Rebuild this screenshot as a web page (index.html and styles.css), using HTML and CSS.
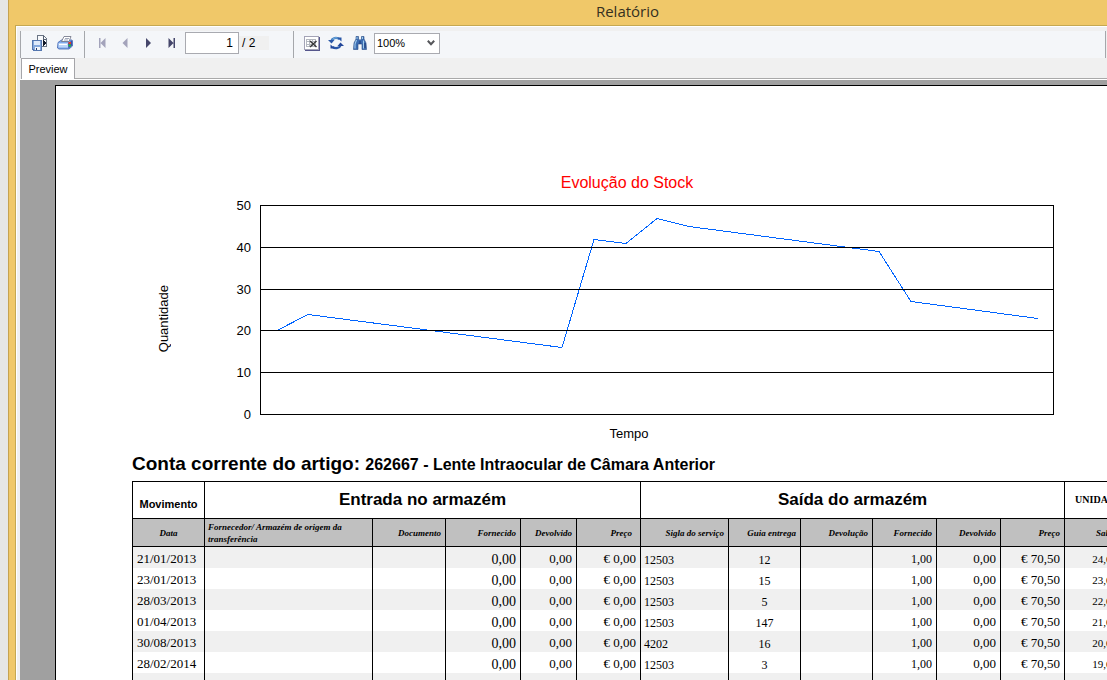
FILE: index.html
```html
<!DOCTYPE html>
<html lang="pt">
<head>
<meta charset="utf-8">
<title>Relatório</title>
<link rel="stylesheet" href="styles.css">
</head>
<body>
<div class="desktop">
  <main class="window">
    <h1 class="titlebar">Relatório</h1>
    <div class="client">
      <div class="toolbar">
        <div class="group files">
          <button class="tool" type="button" aria-label="Exportar">
            <svg width="16" height="16" viewBox="0 0 16 16" shape-rendering="crispEdges">
              <path d="M5.5 .5h6l3 3v8h-9z" fill="#f7f9fc" stroke="#6a7484"/>
              <path d="M11 1v3h3" fill="none" stroke="#555f70"/>
              <path d="M11 5l3 3-3 3z" fill="#111827"/>
              <path d="M.5 5.500h9v10H2L.5 14z" fill="#86a9dd" stroke="#5577b0"/>
              <path d="M2 6h6v4H2z" fill="#dfeafa"/>
              <path d="M3 12h5v3H3z" fill="#f4f6fa"/><path d="M4 13h1v2H4z" fill="#223a70"/>
            </svg>
          </button>
          <button class="tool" type="button" aria-label="Imprimir">
            <svg width="16" height="14" viewBox="0 0 16 14">
              <path d="M1 6.500L4.500 4H15l.5 1v5L12 13H2L.5 12z" fill="#7fa9ea" stroke="#4365b0" stroke-width=".8"/>
              <path d="M4.500 5.500l2.500-5h7L12 5.500z" fill="#fff" stroke="#6a6f82" stroke-width=".8"/>
              <path d="M8 2.500h4M7 4h4" stroke="#8a93aa" stroke-width=".8"/>
              <path d="M1.500 7H11v4.500H1.500z" fill="#bdd6f9"/><path d="M2 8.500h8" stroke="#fff"/>
              <path d="M11 7l4-2.500v5L11.500 12.500z" fill="#3c4fae"/>
              <path d="M11.500 6h2.500v2h-2.500z" fill="#e33b25"/><path d="M11.500 8.500h2.500v2h-2.500z" fill="#23bd3d"/>
            </svg>
          </button>
        </div>
        <div class="group nav">
          <button class="tool" type="button" disabled aria-label="Primeira página"><svg width="8" height="10" viewBox="0 0 8 10"><path d="M1 0h1.500v10H1zM7.500 0v10L2.500 5z" fill="#a3a3bb"/></svg></button>
          <button class="tool" type="button" disabled aria-label="Página anterior"><svg width="8" height="10" viewBox="0 0 8 10"><path d="M6.500 0v10l-5-5z" fill="#a3a3bb"/></svg></button>
          <button class="tool" type="button" aria-label="Página seguinte"><svg width="8" height="10" viewBox="0 0 8 10"><path d="M2 0v10l5-5z" fill="#45466b"/></svg></button>
          <button class="tool" type="button" aria-label="Última página"><svg width="8" height="10" viewBox="0 0 8 10"><path d="M1.500 0v10l5-5zM6.500 0H8v10H6.500z" fill="#45466b"/></svg></button>
        </div>
        <input class="page-number" type="text" value="1" aria-label="Página">
        <span class="page-total">/ 2</span>
        <div class="group view">
          <button class="tool" type="button" aria-label="Fechar vista">
            <svg width="16" height="15" viewBox="0 0 16 15" shape-rendering="crispEdges">
              <path d="M.5.5h14v13H.5z" fill="#fff" stroke="#a3a3b6"/><path d="M15 1v13.500H1" fill="none" stroke="#55568c"/>
              <path d="M2.500 3.500h9v7h-9zM2 5.500h10M2 8.500h10M5.500 3v8M8.500 3v8" fill="none" stroke="#b4b8c0"/>
              <path d="M6 5l6.500 6M12.500 5L6 11" stroke="#3a3a3a" stroke-width="1.500" shape-rendering="auto"/>
            </svg>
          </button>
          <button class="tool" type="button" aria-label="Atualizar">
            <svg width="16" height="14" viewBox="0 0 16 14">
              <path d="M3.200 5C4.200 2 8.500.8 11.500 3.200" fill="none" stroke="#3f7bc0" stroke-width="2.200"/>
              <path d="M0 4h6.500L3.500 7.500z" fill="#2b58a8"/>
              <path d="M9 1.500L13.500 1.500V5.500z" fill="#2b58a8"/>
              <path d="M12.800 9c-1 3-5.300 4.200-8.300 1.800" fill="none" stroke="#2b58a8" stroke-width="2.200"/>
              <path d="M16 10H9.500L12.500 6.500z" fill="#23479a"/>
              <path d="M7 12.500H2.500V8.500z" fill="#23479a"/>
              <path d="M4.500 3.200C6 1.800 8 1.600 9.500 2" fill="none" stroke="#8bc3e8" stroke-width=".8"/>
            </svg>
          </button>
          <button class="tool" type="button" aria-label="Procurar">
            <svg width="16" height="14" viewBox="0 0 16 14">
              <path d="M4 .5h2.500V3L7.500 4h1L9.500 3V.5H12V3l2 4 .5 6.500H10V8H6v5.500H1.500L2 7l2-4z" fill="#3b6bb0" stroke="#254984" stroke-width=".6"/>
              <path d="M4.500 4L3 8v4.500M11.500 4.500V12.500M5 1v2M10.500 1v2" fill="none" stroke="#9fcbed" stroke-width="1.100"/>
              <path d="M8 5v3M13 7v5" stroke="#1e3973"/>
            </svg>
          </button>
        </div>
        <div class="zoom">
          <select class="zoom-select" aria-label="Zoom"><option>100%</option></select>
          <svg class="zoom-arrow" width="8" height="6" viewBox="0 0 8 6"><path d="M.8.8L4 4.200 7.200.8" fill="none" stroke="#55565a" stroke-width="2"/></svg>
        </div>
      </div>
      <div class="tabs"><button class="tab" type="button">Preview</button></div>
      <div class="viewer">
        <article class="sheet">
          <section class="chart">
            <h2 class="chart-title">Evolução do Stock</h2>
            <div class="chart-body">
              <div class="axis-name"><span class="vertical">Quantidade</span></div>
              <div class="ticks"><span>50</span><span>40</span><span>30</span><span>20</span><span>10</span><span>0</span></div>
              <svg class="plot" viewBox="0 0 794 210" preserveAspectRatio="none" role="img" aria-label="Evolução do Stock">
                <polyline class="series" points="16,126 48,109.500 302,142.500 334,34.500 366,38.500 397,13.500 429,21.500 619,46.500 651,96.500 778,113.500"/>
                <path class="grid" d="M.5.5h793v209H.5zM0 42.500h794M0 84.500h794M0 125.500h794M0 167.500h794"/>
              </svg>
            </div>
            <p class="chart-x">Tempo</p>
          </section>
          <h2 class="account">Conta corrente do artigo: <span class="article">262667 - Lente Intraocular de Câmara Anterior</span></h2>
          <table class="ledger">
            <colgroup>
              <col class="w-date"><col class="w-supplier"><col class="w-doc"><col class="w-in"><col class="w-back"><col class="w-std">
              <col class="w-service"><col class="w-guide"><col class="w-guide"><col class="w-std"><col class="w-std"><col class="w-std"><col class="w-std">
            </colgroup>
            <thead>
              <tr class="groups"><th class="movement">Movimento</th><th colspan="5">Entrada no armazém</th><th colspan="6">Saída do armazém</th><th class="units">UNIDADES</th></tr>
              <tr class="fields"><th class="center">Data</th><th class="supplier">Fornecedor/ Armazém de origem da transferência</th><th>Documento</th><th>Fornecido</th><th>Devolvido</th><th class="price">Preço</th><th>Sigla do serviço</th><th>Guia entrega</th><th>Devolução</th><th>Fornecido</th><th>Devolvido</th><th>Preço</th><th class="balance">Saldo</th></tr>
            </thead>
            <tbody>
              <tr><td class="date">21/01/2013</td><td></td><td></td><td class="big">0,00</td><td>0,00</td><td>€ 0,00</td><td class="code">12503</td><td class="guide">12</td><td></td><td class="small">1,00</td><td>0,00</td><td>€ 70,50</td><td class="balance">24,00</td></tr>
              <tr><td class="date">23/01/2013</td><td></td><td></td><td class="big">0,00</td><td>0,00</td><td>€ 0,00</td><td class="code">12503</td><td class="guide">15</td><td></td><td class="small">1,00</td><td>0,00</td><td>€ 70,50</td><td class="balance">23,00</td></tr>
              <tr><td class="date">28/03/2013</td><td></td><td></td><td class="big">0,00</td><td>0,00</td><td>€ 0,00</td><td class="code">12503</td><td class="guide">5</td><td></td><td class="small">1,00</td><td>0,00</td><td>€ 70,50</td><td class="balance">22,00</td></tr>
              <tr><td class="date">01/04/2013</td><td></td><td></td><td class="big">0,00</td><td>0,00</td><td>€ 0,00</td><td class="code">12503</td><td class="guide">147</td><td></td><td class="small">1,00</td><td>0,00</td><td>€ 70,50</td><td class="balance">21,00</td></tr>
              <tr><td class="date">30/08/2013</td><td></td><td></td><td class="big">0,00</td><td>0,00</td><td>€ 0,00</td><td class="code">4202</td><td class="guide">16</td><td></td><td class="small">1,00</td><td>0,00</td><td>€ 70,50</td><td class="balance">20,00</td></tr>
              <tr><td class="date">28/02/2014</td><td></td><td></td><td class="big">0,00</td><td>0,00</td><td>€ 0,00</td><td class="code">12503</td><td class="guide">3</td><td></td><td class="small">1,00</td><td>0,00</td><td>€ 70,50</td><td class="balance">19,00</td></tr>
              <tr><td></td><td></td><td></td><td></td><td></td><td></td><td></td><td></td><td></td><td></td><td></td><td></td><td></td></tr>
            </tbody>
          </table>
        </article>
      </div>
    </div>
  </main>
</div>
</body>
</html>
```
FILE: styles.css
```css
* { box-sizing: border-box; }
body { margin: 0; font-family: "Liberation Sans", Arial, sans-serif; font-size: 11px; color: #000; }
h1, h2, p { margin: 0; font-weight: normal; }
button, input, select { font: inherit; color: inherit; margin: 0; padding: 0; }

.desktop { height: 100vh; padding-left: 8px; background: #e6e6e6; overflow: hidden; }
.window { display: flex; flex-direction: column; height: 100%; padding-left: 6px; background: #f0c869; border-left: 1px solid #c5a252; }
.titlebar { height: 25px; padding-left: 133px; font: 15px/22px "Open Sans", sans-serif; color: #35301f; text-align: center; }
.client { flex: 1; min-height: 0; display: flex; flex-direction: column; padding: 4px 0 0 3px; background: #f0f0f0; border: 1px solid #c5a851; border-width: 1px 0 0 1px; box-shadow: inset 1px 1px #fff; }

.toolbar { display: flex; align-items: center; height: 27px; margin: 1px 1px 0; flex: none; background: #f4f6f9; border-left: 1px solid #a5a7ab; border-right: 1px solid #a5a7ab; }
.group { display: flex; align-items: center; align-self: stretch; }
.files { gap: 9px; padding: 0 11px 3px; border-right: 1px solid #a5a7ab; }
.nav { gap: 15px; padding: 0 10px 3px 13px; }
.view { gap: 8px; padding: 0 6px 3px 10px; margin-left: 24px; border-left: 1px solid #a5a7ab; }
.tool { display: flex; padding: 0; border: 0; background: none; }
.page-number { width: 54px; height: 22px; padding-right: 5px; margin-bottom: 3px; border: 1px solid #a9aab0; background: #fff; text-align: right; font-size: 12px; }
.page-total { width: 30px; margin-bottom: 3px; padding-left: 3px; background: #f0f0f0; font-size: 12px; line-height: 14px; }
.zoom { display: grid; align-items: center; margin-bottom: 3px; }
.zoom-select { grid-area: 1 / 1; width: 66px; height: 21px; padding-left: 2px; border: 1px solid #a9aab0; border-radius: 0; background: #fff; appearance: none; }
.zoom-arrow { grid-area: 1 / 1; justify-self: end; margin-right: 5px; pointer-events: none; }

.tabs { flex: none; height: 21px; margin-left: 2px; border-bottom: 1px solid #a9a9a9; }
.tab { height: 22px; width: 54px; padding-bottom: 2px; border: 1px solid #a5a5a9; border-bottom: 0; background: #fff; }
.viewer { flex: 1; min-height: 0; margin-left: 1px; overflow: hidden; padding: 5px 0 0 35px; background: #a0a0a0; border-top: 1px solid #fff; }

.sheet { height: 1120px; padding: 87px 0 0 76px; background: #fff; border: 1px solid #000; border-right: 0; }
.chart { padding-right: 53px; }
.chart-title { margin-right: -68px; color: #f00; font-size: 16px; line-height: 20px; text-align: center; }
.chart-body { display: flex; height: 210px; margin-top: 12px; }
.axis-name { display: flex; align-items: center; width: 62px; padding: 18px 0 0 23px; font-size: 13px; }
.vertical { writing-mode: vertical-rl; transform: rotate(180deg); line-height: 18px; }
.ticks { display: flex; flex-direction: column; justify-content: space-between; width: 66px; margin: -8px 0 -9px; padding-right: 9px; font-size: 13px; line-height: 18px; text-align: right; }
.plot { flex: 1; min-width: 0; height: 210px; }
.grid { fill: none; stroke: #000; shape-rendering: crispEdges; }
.series { fill: none; stroke: #0064ff; shape-rendering: crispEdges; }
.chart-x { margin-left: 72px; font-size: 13px; line-height: 18px; padding-top: 10px; text-align: center; }

.account { padding-top: 9px; font-size: 19px; font-weight: bold; line-height: 24px; white-space: nowrap; }
.article { font-size: 16px; }

.ledger { width: 996px; margin-top: 4px; table-layout: fixed; border-spacing: 0; border-top: 1px solid #000; font-family: "Liberation Serif", "Times New Roman", serif; }
.w-date { width: 72px; }
.w-supplier { width: 168px; }
.w-doc { width: 73px; }
.w-in { width: 75px; }
.w-back { width: 56px; }
.w-std { width: 64px; }
.w-service { width: 88px; }
.w-guide { width: 72px; }
.ledger th, .ledger td { padding: 0 4px; border-left: 1px solid #000; white-space: nowrap; }
.groups th { height: 37px; border-bottom: 1px solid #000; font: bold 17px/20px "Liberation Sans", Arial, sans-serif; }
.groups .movement { padding-top: 8px; font-size: 11px; }
.groups .units { padding-left: 10px; font: bold 10px/20px "Liberation Serif", serif; text-align: left; }
.fields th { height: 28px; background: #c0c0c0; border-bottom: 1px solid #000; font-size: 9px; font-style: italic; line-height: 12px; text-align: right; }
.ledger .center { text-align: center; }
.ledger .price { padding-right: 8px; }
.ledger .supplier { padding-left: 3px; white-space: normal; text-align: left; }
.ledger td { height: 21px; padding-top: 3px; font-size: 13px; line-height: 18px; text-align: right; }
.ledger tbody tr:nth-child(odd) { background: #f0f0f0; }
.ledger .date { text-align: left; }
.ledger .big { font-size: 14px; padding-top: 5px; line-height: 16px; }
.ledger .code { font-size: 12px; padding-left: 3px; padding-top: 5px; line-height: 16px; text-align: left; }
.ledger .guide { font-size: 12px; padding-top: 5px; line-height: 16px; text-align: center; }
.ledger .small { font-size: 12px; }
.ledger .balance { padding-right: 11px; }
.ledger td.balance { font-size: 11px; line-height: 16px; }
```
